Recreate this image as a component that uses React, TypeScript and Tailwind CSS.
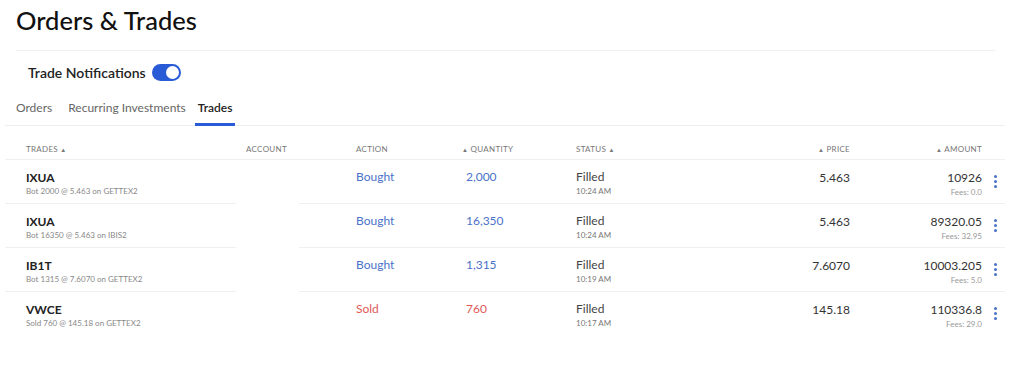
import React from "react";

type Row = {
  sym: string;
  desc: string;
  action: string;
  qty: string;
  time: string;
  price: string;
  amount: string;
  fees: string;
  sold?: boolean;
};

const rows: Row[] = [
  { sym: "IXUA", desc: "Bot 2000 @ 5.463 on GETTEX2", action: "Bought", qty: "2,000", time: "10:24 AM", price: "5.463", amount: "10926", fees: "Fees: 0.0" },
  { sym: "IXUA", desc: "Bot 16350 @ 5.463 on IBIS2", action: "Bought", qty: "16,350", time: "10:24 AM", price: "5.463", amount: "89320.05", fees: "Fees: 32.95" },
  { sym: "IB1T", desc: "Bot 1315 @ 7.6070 on GETTEX2", action: "Bought", qty: "1,315", time: "10:19 AM", price: "7.6070", amount: "10003.205", fees: "Fees: 5.0" },
  { sym: "VWCE", desc: "Sold 760 @ 145.18 on GETTEX2", action: "Sold", qty: "760", time: "10:17 AM", price: "145.18", amount: "110336.8", fees: "Fees: 29.0", sold: true },
];

const Up = () => <span className="text-[6px] align-middle">▲</span>;

export default function App() {
  return (
    <div className="w-[1024px] h-[369px] bg-white text-[#1f1f1f] overflow-hidden" style={{ fontFamily: "Lato, 'Open Sans', sans-serif" }}>
      <div className="px-4">
        <h1 className="text-[25.5px] leading-[38px] pt-[1px] font-medium text-[#111]">Orders &amp; Trades</h1>
        <div className="mt-[11px] h-px bg-[#f0f0f0] w-[979px]" />
        <div className="flex items-center gap-[6px] pl-3 mt-[12px] h-[18px]">
          <span className="text-[14px] font-semibold text-[#222]">Trade Notifications</span>
          <span className="relative w-[29px] h-[17px] rounded-full bg-[#2a5bd7] inline-block">
            <span className="absolute right-[2px] top-[2px] w-[13px] h-[13px] rounded-full bg-white" />
          </span>
        </div>
      </div>
      <div className="ml-[5px] w-[1000px] border-b border-[#eeeeee] mt-[14px] flex text-[12px] leading-[16px] h-[31px]">
        <div className="pl-[11px] pt-[5px] text-[#666]">Orders</div>
        <div className="pl-[16px] pt-[5px] text-[#666]">Recurring Investments</div>
        <div className="ml-[9px] px-[3px] pt-[5px] font-semibold text-[#222] border-b-[3px] border-[#2a5bd7] h-[31px]">Trades</div>
      </div>
      <div className="ml-[5px] w-[1000px] mt-[10px]">
        <div className="flex h-[24px] items-start border-b border-[#f0f0f0] text-[8px] text-[#777] tracking-[0.3px] leading-[24px] pt-[1px]">
          <div className="w-[231px] pl-[21px]">TRADES <Up /></div>
          <div className="w-[110px] pl-[10px]">ACCOUNT</div>
          <div className="w-[110px] pl-[10px]">ACTION</div>
          <div className="w-[110px] pl-[6px]"><Up /> QUANTITY</div>
          <div className="w-[110px] pl-[10px]">STATUS <Up /></div>
          <div className="w-[184px] pr-[10px] text-right"><Up /> PRICE</div>
          <div className="w-[132px] pr-[10px] text-right"><Up /> AMOUNT</div>
          <div className="w-[13px]" />
        </div>
        {rows.map((r, i) => {
          const b = i < rows.length - 1 ? "border-b border-[#f0f0f0]" : "";
          const c = r.sold ? "text-[#e05a5a]" : "text-[#4a72c9]";
          return (
            <div key={i} className="flex h-[44px]">
              <div className={`w-[231px] pl-[21px] pt-[10px] ${b}`}>
                <div className="text-[12px] font-bold leading-[16px] text-[#222]">{r.sym}</div>
                <div className="text-[8px] leading-[10px] text-[#888]">{r.desc}</div>
              </div>
              <div className="w-[63px]" />
              <div className={`w-[47px] ${b}`} />
              <div className={`w-[110px] pl-[10px] pt-[9px] text-[12px] leading-[16px] ${c} ${b}`}>{r.action}</div>
              <div className={`w-[110px] pl-[10px] pt-[9px] text-[12px] leading-[16px] ${c} ${b}`}>{r.qty}</div>
              <div className={`w-[110px] pl-[10px] pt-[9px] ${b}`}>
                <div className="text-[12px] leading-[16px] text-[#444]">Filled</div>
                <div className="text-[8px] leading-[10px] text-[#777] mt-[1px]">{r.time}</div>
              </div>
              <div className={`w-[184px] pr-[10px] pt-[10px] text-right text-[12px] leading-[16px] text-[#333] ${b}`}>{r.price}</div>
              <div className={`w-[132px] pr-[10px] pt-[10px] text-right ${b}`}>
                <div className="text-[12px] leading-[16px] text-[#333]">{r.amount}</div>
                <div className="text-[8px] leading-[10px] text-[#999] mt-[1px]">{r.fees}</div>
              </div>
              <div className={`w-[13px] pt-[15px] ${b}`}>
                <div className="flex flex-col gap-[2px] pl-[2px]">
                  <span className="w-[3px] h-[3px] rounded-full bg-[#4a72c9]" />
                  <span className="w-[3px] h-[3px] rounded-full bg-[#4a72c9]" />
                  <span className="w-[3px] h-[3px] rounded-full bg-[#4a72c9]" />
                </div>
              </div>
            </div>
          );
        })}
      </div>
    </div>
  );
}
